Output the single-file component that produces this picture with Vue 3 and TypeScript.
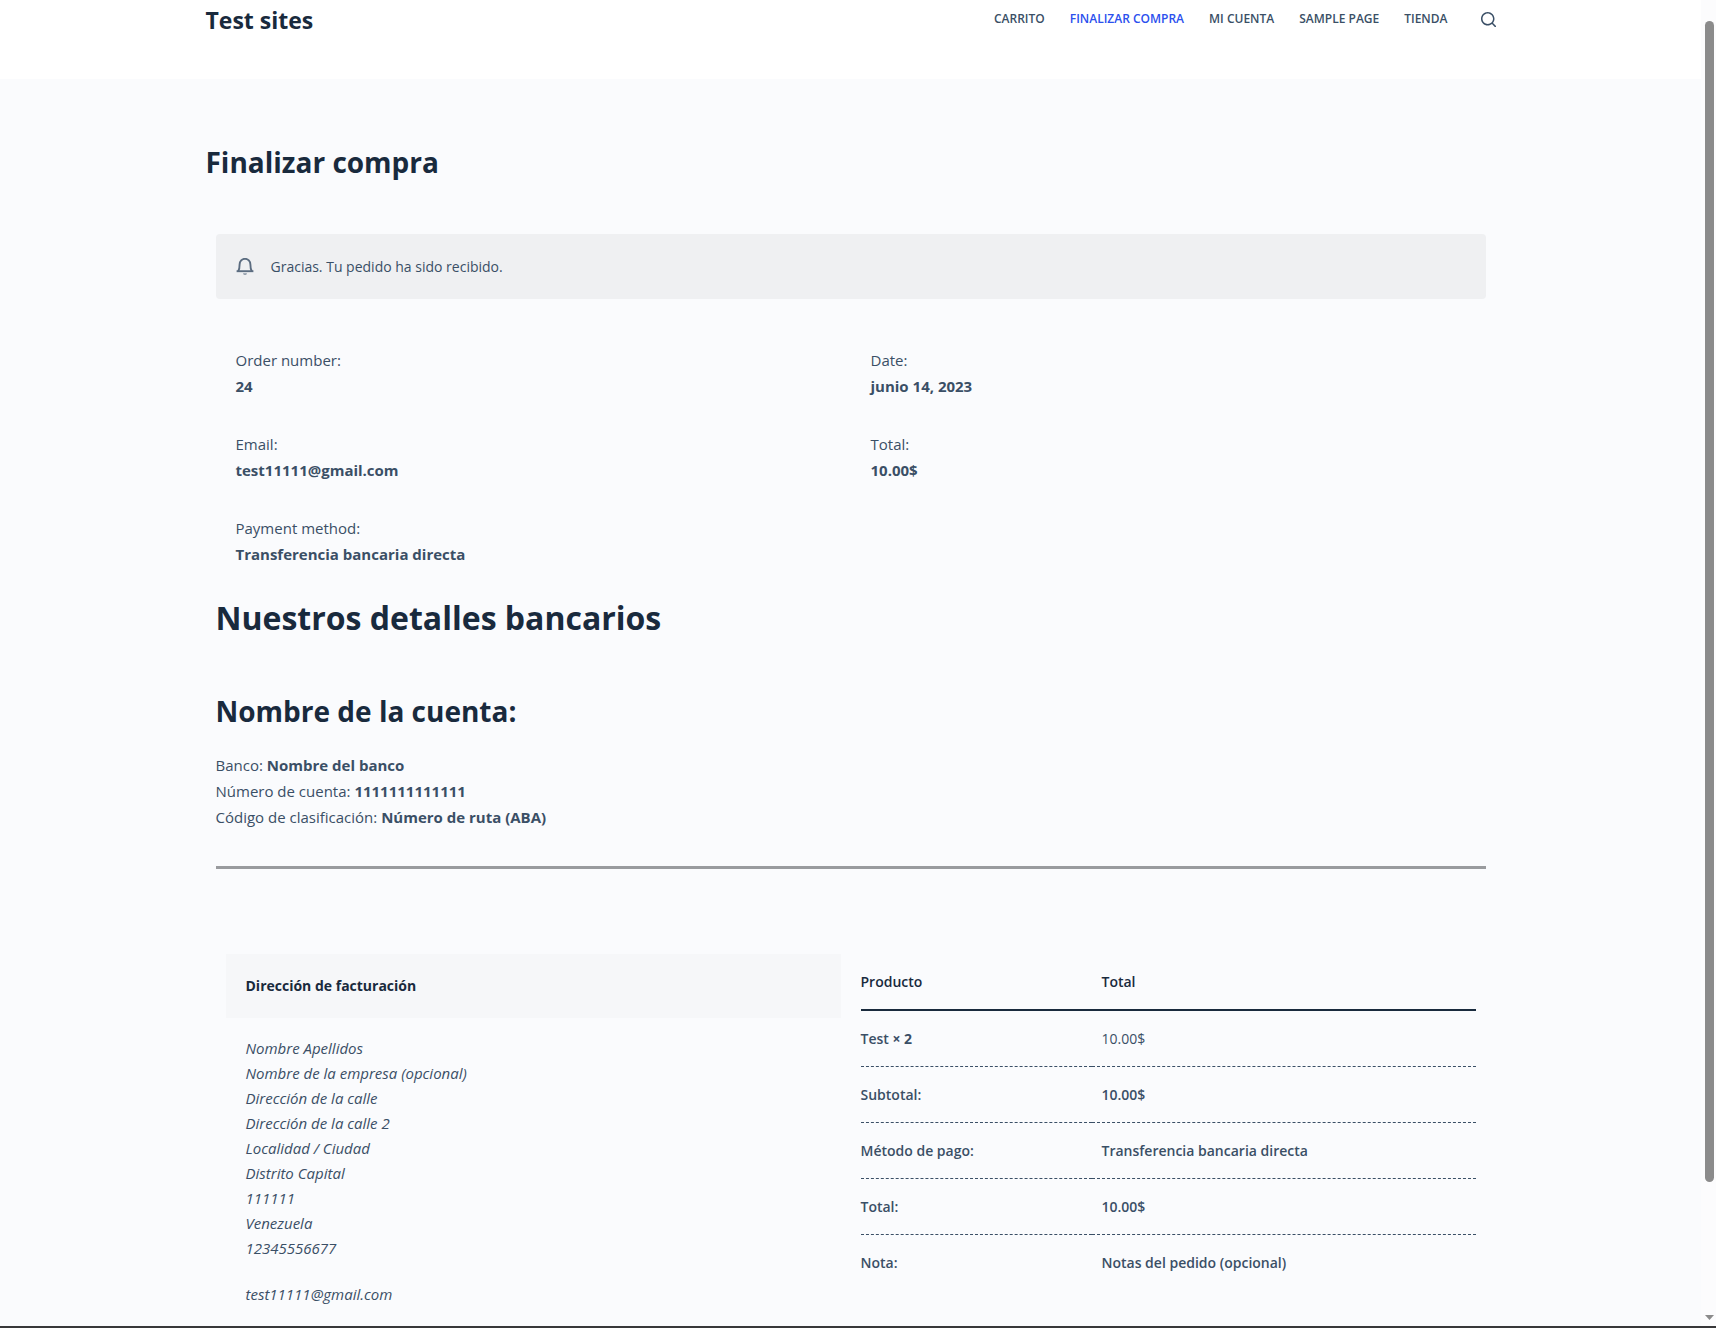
<script setup lang="ts">
interface NavItem { label: string; active?: boolean }
interface Pair { label: string; value: string }

const nav: NavItem[] = [
  { label: 'Carrito' },
  { label: 'Finalizar compra', active: true },
  { label: 'Mi cuenta' },
  { label: 'Sample Page' },
  { label: 'Tienda' },
]

const overview: Pair[] = [
  { label: 'Order number:', value: '24' },
  { label: 'Date:', value: 'junio 14, 2023' },
  { label: 'Email:', value: 'test11111@gmail.com' },
  { label: 'Total:', value: '10.00$' },
  { label: 'Payment method:', value: 'Transferencia bancaria directa' },
]

const bank: Pair[] = [
  { label: 'Banco:', value: 'Nombre del banco' },
  { label: 'Número de cuenta:', value: '1111111111111' },
  { label: 'Código de clasificación:', value: 'Número de ruta (ABA)' },
]

const address: string[] = [
  'Nombre Apellidos',
  'Nombre de la empresa (opcional)',
  'Dirección de la calle',
  'Dirección de la calle 2',
  'Localidad / Ciudad',
  'Distrito Capital',
  '111111',
  'Venezuela',
  '12345556677',
]

const totals: Pair[] = [
  { label: 'Subtotal:', value: '10.00$' },
  { label: 'Método de pago:', value: 'Transferencia bancaria directa' },
  { label: 'Total:', value: '10.00$' },
  { label: 'Nota:', value: 'Notas del pedido (opcional)' },
]
</script>

<template>
  <div class="window">
    <div class="viewport">
      <div class="page">
        <header class="site-header">
          <div class="container header-row">
            <a href="#" class="site-title">Test sites</a>
            <nav class="menu" aria-label="Principal">
              <div class="links">
                <a v-for="item in nav" :key="item.label" href="#" :class="{ active: item.active }">{{ item.label }}</a>
              </div>
              <button type="button" class="search" aria-label="Buscar">
                <svg viewBox="0 0 15 15" width="15" height="15" aria-hidden="true">
                  <path d="M14.8,13.7L12,11c0.9-1.2,1.5-2.6,1.5-4.2c0-3.7-3-6.8-6.8-6.8S0,3,0,6.8s3,6.8,6.8,6.8c1.6,0,3.1-0.6,4.2-1.5l2.8,2.8c0.1,0.1,0.3,0.2,0.5,0.2s0.4-0.1,0.5-0.2C15.1,14.5,15.1,14,14.8,13.7z M1.5,6.8c0-2.9,2.4-5.2,5.2-5.2S12,3.9,12,6.8S9.6,12,6.8,12S1.5,9.6,1.5,6.8z" />
                </svg>
              </button>
            </nav>
          </div>
        </header>

        <main class="container">
          <h1 class="page-title">Finalizar compra</h1>

          <div class="order">
            <p class="notice" role="status">
              <svg viewBox="0 0 18 18" width="18" height="18" aria-hidden="true">
                <path d="M.6 13.200h16.800" />
                <path d="M2.200 13.200C3.300 11.600 3.600 9.800 3.600 6.400a5.400 5.600 0 0 1 10.800 0c0 3.400.3 5.200 1.400 6.800" />
                <path d="M7 15.600h4c-.5 1.600-3.500 1.600-4 0z" class="clapper" />
              </svg>
              Gracias. Tu pedido ha sido recibido.
            </p>

            <ul class="overview">
              <li v-for="item in overview" :key="item.label">
                {{ item.label }}
                <strong>{{ item.value }}</strong>
              </li>
            </ul>

            <section class="bank">
              <h2>Nuestros detalles bancarios</h2>
              <h3>Nombre de la cuenta:</h3>
              <ul>
                <li v-for="item in bank" :key="item.label">{{ item.label }} <strong>{{ item.value }}</strong></li>
              </ul>
            </section>

            <div class="details">
              <section class="billing">
                <h4>Dirección de facturación</h4>
                <address>
                  <span v-for="line in address" :key="line">{{ line }}</span>
                  <span class="email">test11111@gmail.com</span>
                </address>
              </section>

              <table class="items">
                <thead>
                  <tr><th scope="col">Producto</th><th scope="col">Total</th></tr>
                </thead>
                <tbody>
                  <tr><td><a href="#">Test</a> <strong>× 2</strong></td><td>10.00$</td></tr>
                </tbody>
                <tfoot>
                  <tr v-for="row in totals" :key="row.label">
                    <th scope="row">{{ row.label }}</th><td>{{ row.value }}</td>
                  </tr>
                </tfoot>
              </table>
            </div>
          </div>
        </main>
      </div>

      <div class="scrollbar" aria-hidden="true">
        <div class="thumb"></div>
        <div class="rest"></div>
        <svg viewBox="0 0 9 5" width="9" height="5"><path d="M0 0h9L4.500 5z" /></svg>
      </div>
    </div>
  </div>
</template>

<style>
body {
  margin: 0;
}
</style>

<style scoped>
.window {
  box-sizing: border-box;
  height: 100vh;
  border-bottom: 2px solid #38383a;
  overflow: hidden;
  font-family: "Open Sans", "Noto Sans", sans-serif;
  font-size: 15px;
  line-height: 26px;
  color: #3a4f66;
}
.viewport {
  display: flex;
  height: 100%;
}
.page {
  flex: 1;
  min-width: 0;
  overflow: hidden;
  background: #fafbfd;
}
.container {
  max-width: 1290px;
  margin: 0 auto;
}
ul {
  list-style: none;
  margin: 0;
  padding: 0;
}
a {
  color: inherit;
  text-decoration: none;
}
h1, h2, h3, h4, p {
  margin: 0;
}
h1, h2, h3, .site-title {
  color: #192a3d;
  font-weight: 700;
}
.site-header {
  background: #fff;
  padding-bottom: 38px;
}
.header-row {
  display: flex;
  justify-content: space-between;
  align-items: flex-start;
}
.site-title {
  font-size: 23px;
  line-height: 41px;
}
.menu {
  display: flex;
  align-items: center;
  gap: 33px;
  height: 39px;
}
.links {
  display: flex;
  gap: 25px;
  padding-bottom: 2px;
  font-size: 12px;
  font-weight: 600;
  text-transform: uppercase;
}
.links .active {
  color: #2b50ee;
}
.search {
  display: flex;
  padding: 0;
  border: 0;
  background: none;
}
.search svg {
  fill: #3a4f66;
}
.page-title {
  padding: 61px 0 49px;
  font-size: 28px;
  line-height: 45px;
}
.order {
  padding: 0 10px;
}
.notice {
  display: flex;
  align-items: center;
  gap: 17px;
  padding: 20px;
  border-radius: 4px;
  background: #eff0f2;
  font-size: 14px;
  line-height: 25px;
}
.notice svg {
  fill: none;
  stroke: #5b6c80;
  stroke-width: 1.9;
}
.notice .clapper {
  fill: #5b6c80;
  stroke: none;
}
.overview {
  display: grid;
  grid-template-columns: 1fr 1fr;
  row-gap: 32px;
  margin: 48px 0 25px;
}
.overview li {
  padding: 0 20px;
}
.overview strong {
  display: block;
}
.bank {
  padding-bottom: 36px;
  border-bottom: 3px solid #999b9e;
}
.bank h2 {
  margin-bottom: 45px;
  font-size: 32px;
  line-height: 52px;
}
.bank h3 {
  margin-bottom: 18px;
  font-size: 28px;
  line-height: 45px;
}
.details {
  display: grid;
  grid-template-columns: 1fr 1fr;
  gap: 20px;
  align-items: start;
  padding: 85px 10px 0;
}
.billing h4 {
  padding: 20px;
  background: #f6f7f9;
  color: #192a3d;
  font-size: 14px;
  line-height: 24px;
}
address {
  padding: 18px 20px;
  font-size: 15px;
  line-height: 25px;
}
address span {
  display: block;
}
address .email {
  margin-top: 21px;
}
.items {
  width: 100%;
  border-collapse: collapse;
  table-layout: fixed;
  font-size: 14px;
  line-height: 25px;
  text-align: left;
}
.items th, .items td {
  padding: 15px 10px;
  border-bottom: 1px dashed #3a4f66;
  font-weight: 600;
}
.items th:first-child, .items td:first-child {
  width: 221px;
  padding-left: 0;
}
.items thead th {
  border-bottom: 2px solid #192a3d;
  color: #192a3d;
}
.items tbody td:last-child {
  font-weight: 400;
}
.items tfoot tr:last-child > * {
  border-bottom: 0;
}
.items strong {
  font-weight: 700;
}
.scrollbar {
  display: flex;
  flex-direction: column;
  align-items: center;
  width: 15px;
  box-sizing: border-box;
  padding: 21px 0 6px 2px;
  background: #fcfcfd;
}
.thumb {
  flex: 1161;
  width: 9px;
  border-radius: 5px;
  background: #8b8b8b;
}
.rest {
  flex: 133;
}
.scrollbar svg {
  fill: #8b8b8b;
}
</style>
